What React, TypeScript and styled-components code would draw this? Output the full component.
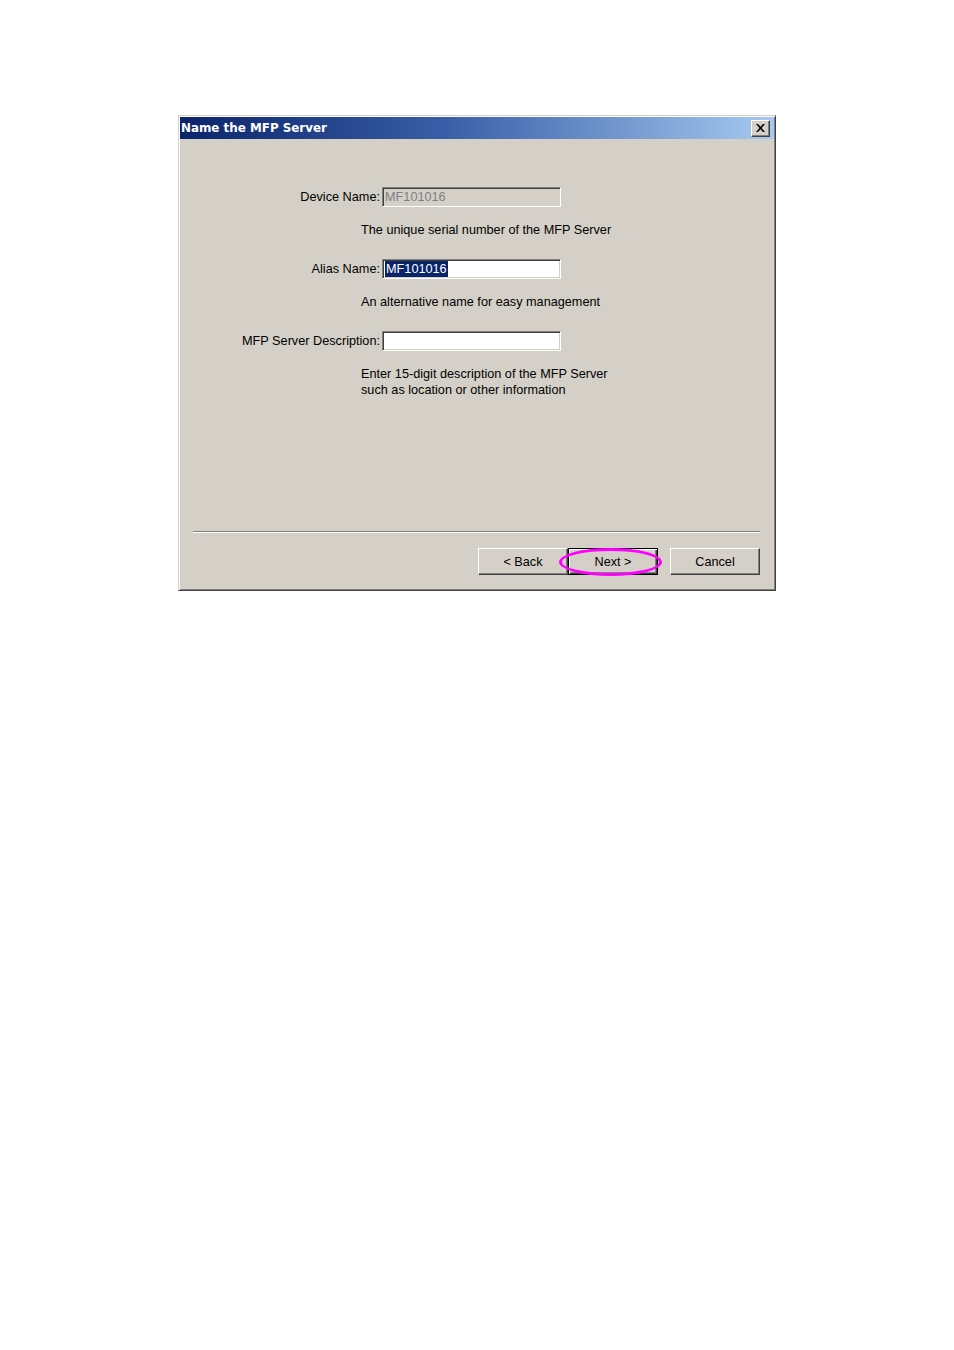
import React from "react";
import styled, { createGlobalStyle } from "styled-components";

const GlobalStyle = createGlobalStyle`
  html, body {
    margin: 0;
    padding: 0;
    background: #ffffff;
  }

  body {
    font-family: "Liberation Sans", Arial, sans-serif;
  }
`;

const App: React.FC = () => {
  return (
    <Page>
      <GlobalStyle />
      <Window>
        <TitleBar>
          <TitleText>Name the MFP Server</TitleText>
          <CloseButton type="button" aria-label="Close">
            <svg width="9" height="8" viewBox="0 0 9 8">
              <path d="M0 0h2l2.5 2.8L7 0h2L5.5 4 9 8H7L4.5 5.2 2 8H0l3.5-4z" fill="#000" />
            </svg>
          </CloseButton>
        </TitleBar>

        <Body>
          <Form>
            <FieldGroup>
              <FieldRow>
                <Label>Device Name:</Label>
                <TextBox $disabled>MF101016</TextBox>
              </FieldRow>
              <Hint>The unique serial number of the MFP Server</Hint>
            </FieldGroup>

            <FieldGroup>
              <FieldRow>
                <Label>Alias Name:</Label>
                <TextBox>
                  <Selected>MF101016</Selected>
                </TextBox>
              </FieldRow>
              <Hint>An alternative name for easy management</Hint>
            </FieldGroup>

            <FieldGroup>
              <FieldRow>
                <Label>MFP Server Description:</Label>
                <TextBox />
              </FieldRow>
              <Hint>
                Enter 15-digit description of the MFP Server
                <br />
                such as location or other information
              </Hint>
            </FieldGroup>
          </Form>

          <Separator />

          <ButtonRow>
            <WizardButtons>
              <Button type="button">&lt; Back</Button>
              <Button type="button" $default>
                Next &gt;
                <Highlight />
              </Button>
            </WizardButtons>
            <Button type="button">Cancel</Button>
          </ButtonRow>
        </Body>
      </Window>
    </Page>
  );
};

export default App;

const Page = styled.main`
  min-height: 1350px;
  padding: 115px 0 0 178px;
  box-sizing: border-box;
`;

const Window = styled.section`
  width: 598px;
  height: 476px;
  box-sizing: border-box;
  display: flex;
  flex-direction: column;
  padding: 1px;
  border: 1px solid;
  border-color: #d4d0c8 #404040 #404040 #d4d0c8;
  box-shadow: inset 1px 1px 0 #ffffff, inset -1px -1px 0 #808080;
  background: #d4d0c8;
`;

const TitleBar = styled.header`
  height: 22px;
  flex: 0 0 22px;
  display: flex;
  align-items: center;
  justify-content: space-between;
  padding: 0 4px 0 1px;
  background: linear-gradient(90deg, #0a246a 0%, #3a5fa8 45%, #a6caf0 100%);
`;

const TitleText = styled.h1`
  margin: 0;
  color: #ffffff;
  font-family: "DejaVu Sans", Tahoma, sans-serif;
  font-size: 11.9px;
  font-weight: 700;
  line-height: 22px;
  white-space: nowrap;
`;

const CloseButton = styled.button`
  width: 19px;
  height: 17px;
  padding: 0;
  display: grid;
  place-items: center;
  border: 1px solid;
  border-color: #ffffff #404040 #404040 #ffffff;
  box-shadow: inset -1px -1px 0 #808080;
  background: #d4d0c8;
`;

const Body = styled.div`
  flex: 1;
  display: flex;
  flex-direction: column;
  padding: 0 14px 14px 13px;
  color: #000000;
  font-size: 12.7px;
`;

const Form = styled.div`
  flex: 1;
  display: flex;
  flex-direction: column;
  gap: 21px;
  padding-top: 48px;
`;

const FieldGroup = styled.div`
  display: flex;
  flex-direction: column;
  gap: 15px;
`;

const FieldRow = styled.div`
  display: flex;
  align-items: center;
  height: 20px;
`;

const Label = styled.span`
  width: 187px;
  margin-right: 2px;
  text-align: right;
  white-space: nowrap;
`;

const TextBox = styled.div<{ $disabled?: boolean }>`
  width: 179px;
  height: 20px;
  box-sizing: border-box;
  display: flex;
  align-items: center;
  padding: 0 2px;
  border: 1px solid;
  border-color: #808080 #ffffff #ffffff #808080;
  box-shadow: inset 1px 1px 0 #404040, inset -1px -1px 0 #d4d0c8;
  background: ${({ $disabled }) => ($disabled ? "#d4d0c8" : "#ffffff")};
  color: ${({ $disabled }) => ($disabled ? "#808080" : "#000000")};
  line-height: 16px;
  white-space: nowrap;
`;

const Selected = styled.span`
  padding: 0 1px;
  background: #0a246a;
  color: #ffffff;
`;

const Hint = styled.p`
  margin: 0 0 0 168px;
  line-height: 16px;
`;

const Separator = styled.hr`
  margin: 0;
  height: 0;
  border: 0;
  border-top: 1px solid #808080;
  border-bottom: 1px solid #ffffff;
`;

const ButtonRow = styled.div`
  display: flex;
  justify-content: flex-end;
  gap: 12px;
  margin-top: 15px;
`;

const WizardButtons = styled.div`
  display: flex;
`;

const Button = styled.button<{ $default?: boolean }>`
  position: relative;
  width: 90px;
  height: 27px;
  padding: 0;
  box-sizing: border-box;
  border: 1px solid;
  border-color: ${({ $default }) => ($default ? "#000000" : "#ffffff #404040 #404040 #ffffff")};
  box-shadow: ${({ $default }) =>
    $default
      ? "inset 1px 1px 0 #ffffff, inset -1px -1px 0 #404040, inset -2px -2px 0 #808080"
      : "inset -1px -1px 0 #808080"};
  background: #d4d0c8;
  color: #000000;
  font-family: "Liberation Sans", Arial, sans-serif;
  font-size: 12.7px;
`;

const Highlight = styled.span`
  position: absolute;
  left: -10px;
  right: -5px;
  top: -1px;
  bottom: -2px;
  border: 3px solid #ff00ff;
  border-radius: 50%;
  pointer-events: none;
`;
